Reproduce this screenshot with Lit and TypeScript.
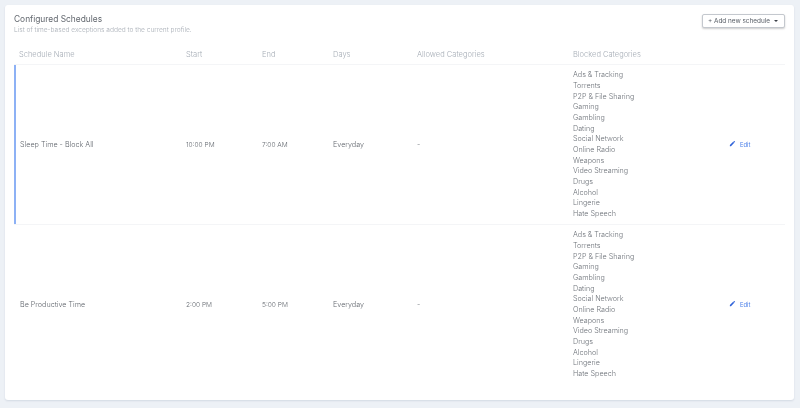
import { LitElement, html, css } from "lit";
import { customElement } from "lit/decorators.js";

const CATS = ["Ads & Tracking","Torrents","P2P & File Sharing","Gaming","Gambling","Dating","Social Network","Online Radio","Weapons","Video Streaming","Drugs","Alcohol","Lingerie","Hate Speech"];
const ROWS = [
  { name: "Sleep Time - Block All", start: "10:00 PM", end: "7:00 AM", days: "Everyday", active: true },
  { name: "Be Productive Time", start: "2:00 PM", end: "5:00 PM", days: "Everyday", active: false },
];

@customElement("app-root")
export class AppRoot extends LitElement {
  static styles = css`
    :host { display: block; width: 800px; height: 408px; box-sizing: border-box; padding: 5px 6px 8px 5px; background: #edf1f6; font-family: Inter, "Open Sans", sans-serif; overflow: hidden; }
    .card { height: 395px; box-sizing: border-box; background: #fff; border-radius: 3px; box-shadow: 0 1px 2px rgba(60,80,110,.14); padding: 9px 9px 0 9px; filter: blur(.2px); }
    .top { display: flex; justify-content: space-between; align-items: flex-start; height: 32px; }
    h1 { margin: 0; font-size: 8.4px; line-height: 11px; font-weight: 400; color: #62676e; }
    .sub { font-size: 6.6px; line-height: 11px; font-weight: 300; color: #a8aeb6; }
    .btn { width: 83px; height: 14px; box-sizing: border-box; border: 1px solid #c4c8ce; border-radius: 2px; background: #fff; box-shadow: 0 1px 2px rgba(0,0,0,.2); color: #5a6068; font: 400 6.4px/12px Inter, sans-serif; display: flex; align-items: center; justify-content: space-between; padding: 0 6px 0 5px; }
    .caret { width: 0; height: 0; border-left: 2.2px solid transparent; border-right: 2.2px solid transparent; border-top: 2.4px solid #3c4148; }
    .grid { display: grid; grid-template-columns: 172px 76px 71px 84px 156px 156px 56px; align-items: center; }
    .head { height: 18px; color: #a6adb6; font-size: 7.5px; font-weight: 300; line-height: 18px; border-bottom: 1px solid #f4f5f7; box-sizing: content-box; }
    .head div:first-child { padding-left: 5px; }
    .row { height: 159px; border-bottom: 1px solid #f4f5f7; font-size: 7.2px; font-weight: 300; color: #62676e; }
    .row:last-child { border-bottom: 0; }
    .row.active { box-shadow: inset 2px 0 0 #8db1f5; }
    .row .name { padding-left: 6px; }
    .row .time { font-size: 6.6px; }
    .cats { line-height: 10.67px; color: #6e737a; padding-top: 1px; }
    .edit { display: flex; align-items: center; gap: 4px; color: #4a7fe8; font-size: 5.8px; font-weight: 400; }
    .edit svg { width: 7px; height: 7px; margin-top: -3px; }
  `;

  render() {
    return html`<div class="card">
      <div class="top">
        <div>
          <h1>Configured Schedules</h1>
          <div class="sub">List of time-based exceptions added to the current profile.</div>
        </div>
        <div class="btn"><span>+ Add new schedule</span><span class="caret"></span></div>
      </div>
      <div class="grid head">
        <div>Schedule Name</div><div>Start</div><div>End</div><div>Days</div><div>Allowed Categories</div><div>Blocked Categories</div><div></div>
      </div>
      ${ROWS.map((r) => html`<div class="grid row ${r.active ? "active" : ""}">
        <div class="name">${r.name}</div><div class="time">${r.start}</div><div class="time">${r.end}</div><div>${r.days}</div><div>-</div>
        <div class="cats">${CATS.map((c) => html`<div>${c}</div>`)}</div>
        <div class="edit"><svg viewBox="0 0 24 24"><path fill="#2f62d9" d="M3 17.2V21h3.8L18 9.8 14.2 6 3 17.2zM20.7 7c.4-.4.4-1 0-1.4l-2.3-2.3c-.4-.4-1-.4-1.4 0L15.2 5.100 19 8.800 20.700 7z"/></svg><span>Edit</span></div>
      </div>`)}
    </div>`;
  }
}
